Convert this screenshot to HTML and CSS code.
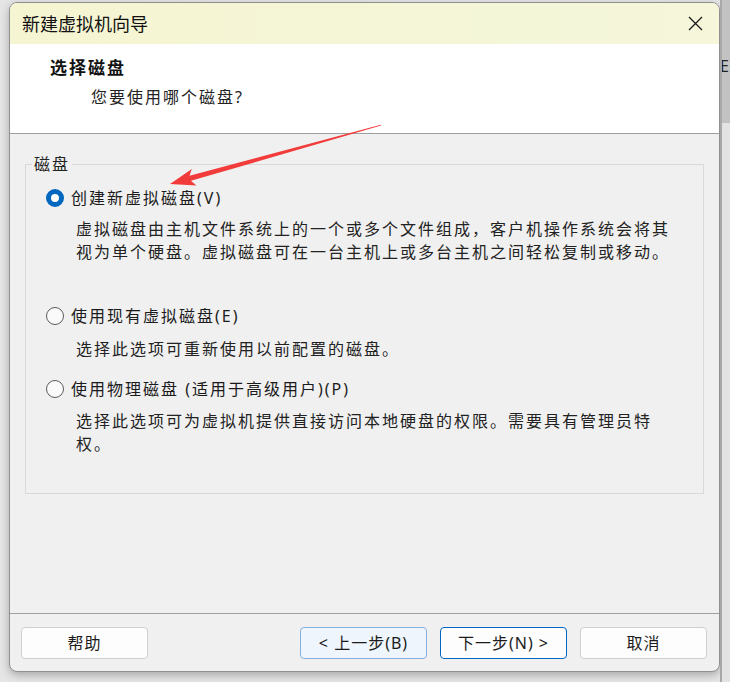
FILE: index.html
```html
<!DOCTYPE html>
<html lang="zh-CN">
<head>
<meta charset="utf-8">
<title>新建虚拟机向导</title>
<link rel="stylesheet" href="styles.css">
</head>
<body>
<div class="screen">
  <div class="window">
    <div class="titlebar">
      <span class="title">新建虚拟机向导</span>
      <svg class="close" width="15" height="15" viewBox="0 0 15 15"><path d="M1 1 L14 14 M14 1 L1 14" stroke="#1a1a1a" stroke-width="1.3" fill="none"/></svg>
    </div>
    <div class="header">
      <div class="heading">选择磁盘</div>
      <div class="subheading">您要使用哪个磁盘?</div>
    </div>
    <div class="content">
      <fieldset class="group">
        <legend class="group-label">磁盘</legend>
        <div class="option opt1">
          <span class="radio checked"></span><span class="label">创建新虚拟磁盘(V)</span>
        </div>
        <p class="desc d1">虚拟磁盘由主机文件系统上的一个或多个文件组成，客户机操作系统会将其<br>视为单个硬盘。虚拟磁盘可在一台主机上或多台主机之间轻松复制或移动。</p>
        <div class="option opt2">
          <span class="radio"></span><span class="label">使用现有虚拟磁盘(E)</span>
        </div>
        <p class="desc d2">选择此选项可重新使用以前配置的磁盘。</p>
        <div class="option opt3">
          <span class="radio"></span><span class="label">使用物理磁盘 (适用于高级用户)(P)</span>
        </div>
        <p class="desc d3">选择此选项可为虚拟机提供直接访问本地硬盘的权限。需要具有管理员特<br>权。</p>
      </fieldset>
    </div>
    <div class="footer">
      <button class="btn">帮助</button>
      <span class="spacer"></span>
      <button class="btn back">&lt; 上一步(B)</button>
      <button class="btn next">下一步(N) &gt;</button>
      <button class="btn">取消</button>
    </div>
  </div>
  <div class="right-edge"><span class="edge-text">E</span></div>
</div>
<svg class="annotation" width="730" height="682" viewBox="0 0 730 682">
  <g transform="translate(170 184) rotate(-15.6)">
    <polygon points="0,0 25,-8.5 21,-2.6 219,-0.4 219,0.4 21,2.6 25,8.5" fill="#f23b3b"/>
  </g>
</svg>
</body>
</html>
```

FILE: styles.css
```css
* { box-sizing: border-box; }

html, body {
  margin: 0;
  padding: 0;
}

body {
  width: 730px;
  height: 682px;
  overflow: hidden;
  position: relative;
  background: #e6e6e6;
  font-family: "Noto Sans", "Noto Sans CJK SC", sans-serif;
  color: #1b1b1b;
}

.screen {
  display: flex;
  align-items: flex-start;
  height: 682px;
  padding-top: 2px;
  padding-left: 9px;
}

.window {
  width: 711px;
  height: 670px;
  border: 1px solid #909090;
  border-radius: 8px;
  overflow: hidden;
  display: flex;
  flex-direction: column;
  background: #f0f0f0;
  box-shadow: 0 3px 10px rgba(0, 0, 0, 0.28);
}

.titlebar {
  height: 41px;
  flex: none;
  display: flex;
  align-items: center;
  justify-content: space-between;
  padding: 0 16px 0 12px;
  background: linear-gradient(to right, #f6f5d2, #f4f6d8 70%, #f5f6da);
}

.title {
  font-size: 18px;
  line-height: 24px;
  color: #111;
  padding-top: 1px;
}

.close {
  display: block;
}

.header {
  height: 90px;
  flex: none;
  background: #ffffff;
  border-bottom: 1px solid #a0a0a0;
  padding: 12px 0 0 40px;
}

.heading {
  font-size: 17px;
  font-weight: bold;
  letter-spacing: 2px;
  line-height: 24px;
  color: #111;
}

.subheading {
  margin-top: 5px;
  padding-left: 41px;
  font-size: 16px;
  letter-spacing: 2px;
  line-height: 24px;
  color: #222;
}

.content {
  flex: 1;
  padding: 20px 15px 0 15px;
}

.group {
  margin: 0;
  padding: 0;
  height: 340px;
  border: 1px solid #d9d9d9;
  min-width: 0;
}

.group-label {
  margin-left: 6px;
  padding: 0 2px;
  font-size: 16px;
  letter-spacing: 2px;
  line-height: 20px;
  color: #222;
}

.option {
  display: flex;
  align-items: center;
  height: 24px;
  padding-left: 20px;
  font-size: 16px;
  letter-spacing: 2px;
  color: #1b1b1b;
}

.opt1 { margin-top: 12px; }
.opt2 { margin-top: 40px; }
.opt3 { margin-top: 16px; }

.radio {
  width: 18px;
  height: 18px;
  border-radius: 50%;
  border: 1px solid #5c5c5c;
  background: #fafafa;
  margin-right: 7px;
  flex: none;
}

.radio.checked {
  border: 5px solid #0067c0;
  background: #ffffff;
}

.label {
  line-height: 24px;
}

.desc {
  margin: 0;
  padding-left: 50px;
  font-size: 16px;
  letter-spacing: 2px;
  line-height: 23px;
  color: #222;
}

.d1 { margin-top: 8px; }
.d2 { margin-top: 10px; }
.d3 { margin-top: 9px; }

.footer {
  height: 58px;
  flex: none;
  border-top: 1px solid #a0a0a0;
  display: flex;
  align-items: flex-start;
  gap: 13px;
  padding: 13px 12px 0 11px;
}

.spacer {
  flex: 1;
}

.btn {
  width: 127px;
  height: 32px;
  border: 1px solid #d0d0d0;
  border-radius: 4px;
  background: #fdfdfd;
  font-family: "Noto Sans", "Noto Sans CJK SC", sans-serif;
  font-size: 16px;
  letter-spacing: 1px;
  color: #1b1b1b;
  padding: 0;
  line-height: 30px;
}

.footer .spacer + .btn {
  margin-left: -13px;
}

.btn.back {
  background: #eef5fd;
  border-color: #86b0dc;
}

.btn.next {
  background: #fdfdfd;
  border-color: #0067c0;
}

.right-edge {
  align-self: stretch;
  flex: 1;
  margin-top: -2px;
  border-left: 2px solid #a8a8a8;
  background: linear-gradient(to bottom, #c2c2c2 0, #c2c2c2 123px, #e3e3e3 123px);
  position: relative;
  overflow: hidden;
}

.edge-text {
  display: block;
  margin-top: 57px;
  margin-left: -2px;
  font-size: 16px;
  line-height: 18px;
  color: #222;
}

.annotation {
  position: absolute;
  left: 0;
  top: 0;
  pointer-events: none;
}
```
